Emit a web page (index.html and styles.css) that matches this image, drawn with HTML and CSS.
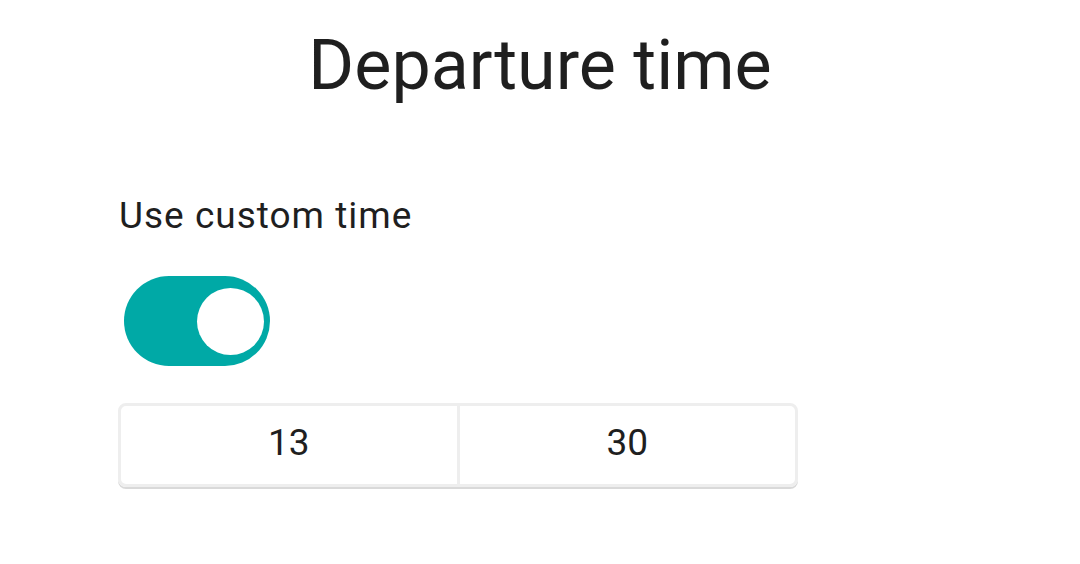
FILE: index.html
```html
<!DOCTYPE html>
<html lang="en">
<head>
<meta charset="utf-8">
<title>Departure time</title>
<link rel="stylesheet" href="styles.css">
</head>
<body>
  <main class="page">
    <h1 class="title">Departure time</h1>
    <section class="content">
      <label class="label">Use custom time</label>
      <div class="toggle" role="switch" aria-checked="true">
        <span class="knob"></span>
      </div>
      <div class="time-group">
        <div class="cell">13</div>
        <div class="cell cell-right">30</div>
      </div>
    </section>
  </main>
</body>
</html>
```
FILE: styles.css
```css
html, body {
  margin: 0;
  padding: 0;
  background: #ffffff;
}
body {
  font-family: Roboto, "Noto Sans", sans-serif;
  color: #1f1f1f;
  width: 1080px;
  height: 564px;
  overflow: hidden;
}
.page {
  padding-top: 30px;
}
.title {
  margin: 0;
  font-size: 70px;
  line-height: 70px;
  font-weight: 400;
  text-align: center;
}
.content {
  padding-left: 118px;
  display: flex;
  flex-direction: column;
  align-items: flex-start;
}
.label {
  margin-top: 97px;
  margin-left: 1px;
  font-size: 37px;
  line-height: 37px;
  letter-spacing: 1px;
  display: block;
}
.toggle {
  margin-top: 42px;
  margin-left: 6px;
  width: 146px;
  height: 90px;
  border-radius: 45px;
  background: #00a9a6;
  position: relative;
}
.knob {
  position: absolute;
  left: 73px;
  top: 12px;
  width: 67px;
  height: 67px;
  border-radius: 50%;
  background: #ffffff;
}
.time-group {
  margin-top: 37px;
  width: 674px;
  height: 78px;
  display: flex;
  border: 3px solid #eeeeee;
  border-radius: 8px;
  box-shadow: 0 2px 0 #d9d9d9;
}
.cell {
  flex: 1;
  display: flex;
  align-items: center;
  justify-content: center;
  font-size: 37px;
  line-height: 37px;
  padding-bottom: 6px;
  box-sizing: border-box;
}
.cell-right {
  border-left: 3px solid #eeeeee;
}
```
